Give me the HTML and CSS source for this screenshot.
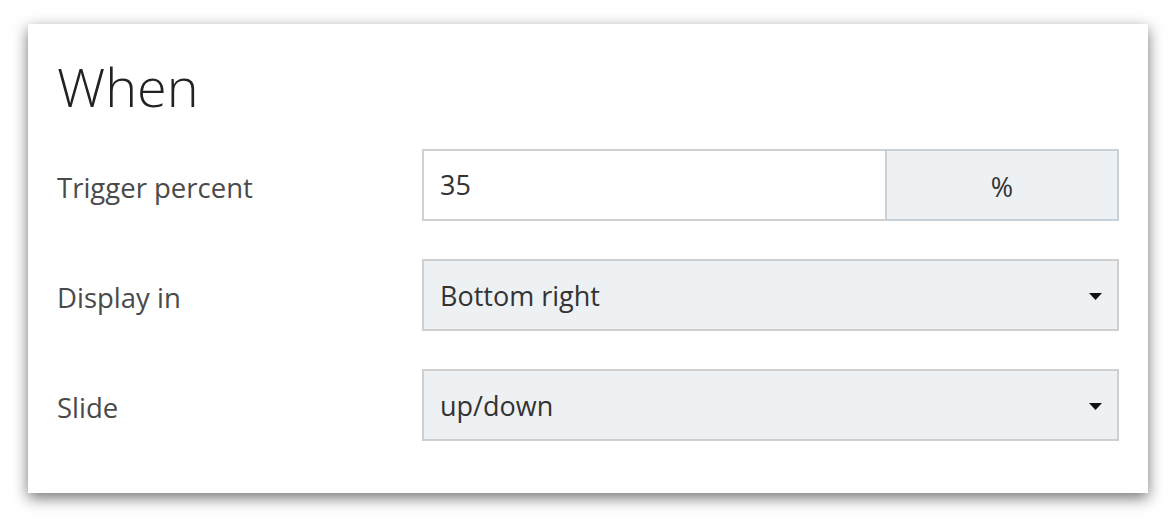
FILE: index.html
```html
<!DOCTYPE html>
<html>
<head>
<meta charset="utf-8">
<link rel="stylesheet" href="styles.css">
</head>
<body>
<div class="card">
  <h1 class="title">When</h1>
  <div class="row">
    <label class="label">Trigger percent</label>
    <div class="field group">
      <div class="input">35</div>
      <div class="addon">%</div>
    </div>
  </div>
  <div class="row">
    <label class="label">Display in</label>
    <div class="field select">
      <span>Bottom right</span>
      <svg class="caret" width="13" height="7" viewBox="0 0 13 7"><path d="M0 0H13L6.5 7Z" fill="#111"/></svg>
    </div>
  </div>
  <div class="row">
    <label class="label">Slide</label>
    <div class="field select">
      <span>up/down</span>
      <svg class="caret" width="13" height="7" viewBox="0 0 13 7"><path d="M0 0H13L6.5 7Z" fill="#111"/></svg>
    </div>
  </div>
</div>
</body>
</html>
```
FILE: styles.css
```css
html, body {
  margin: 0;
  padding: 0;
  background: #fff;
}
body {
  padding: 24px 28px 33px 28px;
  font-family: "Open Sans", "Liberation Sans", sans-serif;
}
.card {
  width: 1120px;
  height: 469px;
  box-sizing: border-box;
  background: #fff;
  box-shadow: 0 5px 14px rgba(0,0,0,0.55);
  padding: 28px 29px 0 29px;
}
.title {
  margin: 0 0 29px 0;
  font-weight: 300;
  font-size: 54px;
  line-height: 68px;
  color: #222;
}
.row {
  display: flex;
  align-items: center;
  height: 72px;
  margin-bottom: 38px;
}
.label {
  width: 365px;
  font-size: 27.5px;
  color: #4a4a4a;
  padding-top: 4px;
}
.field {
  flex: 1;
  height: 72px;
  box-sizing: border-box;
  font-size: 27px;
  color: #333;
}
.group {
  display: flex;
}
.input {
  flex: 1;
  border: 2px solid #d0d0d0;
  border-right: none;
  background: #fff;
  display: flex;
  align-items: center;
  padding-left: 16px;
  padding-bottom: 2px;
}
.addon {
  width: 234px;
  box-sizing: border-box;
  border: 2px solid #c9d1d8;
  background: #eef1f4;
  display: flex;
  align-items: center;
  justify-content: center;
  padding-top: 2px;
}
.select {
  border: 2px solid #cfcfcf;
  background: #eef1f4;
  display: flex;
  align-items: center;
  justify-content: space-between;
  padding: 0 15px 0 16px;
}
.caret {
  margin-top: 2px;
}
```
